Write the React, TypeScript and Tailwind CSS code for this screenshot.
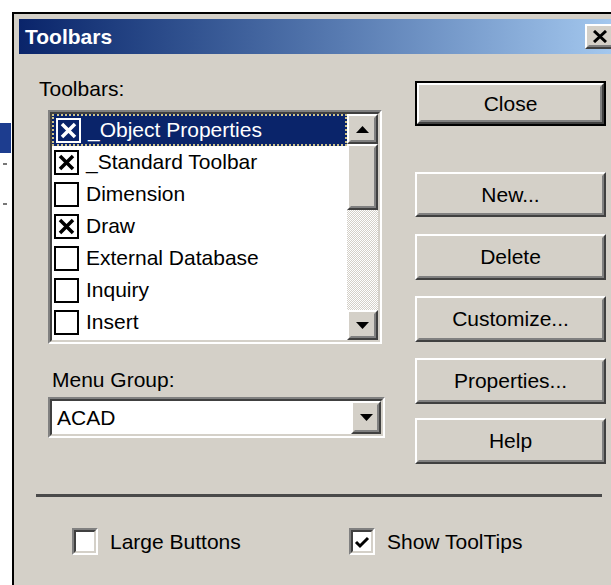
import React from "react";
import clsx from "clsx";

const font = "font-['Liberation_Sans',Arial,sans-serif]";

type Item = { label: string; checked: boolean };

const toolbars: Item[] = [
  { label: "_Object Properties", checked: true },
  { label: "_Standard Toolbar", checked: true },
  { label: "Dimension", checked: false },
  { label: "Draw", checked: true },
  { label: "External Database", checked: false },
  { label: "Inquiry", checked: false },
  { label: "Insert", checked: false },
];

// classic raised 3d edge
const Raised = ({
  className,
  children,
}: {
  className?: string;
  children?: React.ReactNode;
}) => (
  <div
    className={clsx(
      "border-2 border-t-white border-l-white border-b-[#404040] border-r-[#404040] bg-[#d4d0c8]",
      className
    )}
  >
    <div className="h-full w-full border-2 border-t-[#d4d0c8] border-l-[#d4d0c8] border-b-[#808080] border-r-[#808080] flex items-center justify-center">
      {children}
    </div>
  </div>
);

const Sunken = ({
  className,
  children,
}: {
  className?: string;
  children?: React.ReactNode;
}) => (
  <div
    className={clsx(
      "border-2 border-t-[#808080] border-l-[#808080] border-b-white border-r-white",
      className
    )}
  >
    <div className="h-full w-full border-2 border-t-[#404040] border-l-[#404040] border-b-[#d4d0c8] border-r-[#d4d0c8] bg-white overflow-hidden">
      {children}
    </div>
  </div>
);

const Button = ({
  label,
  isDefault,
  className,
}: {
  label: string;
  isDefault?: boolean;
  className?: string;
}) => {
  const inner = (
    <Raised className="h-full w-full">
      <span className="text-[21px] leading-[24px] text-black">{label}</span>
    </Raised>
  );
  if (isDefault) {
    return (
      <div className={clsx("border-2 border-black", className)}>{inner}</div>
    );
  }
  return <div className={className}>{inner}</div>;
};

const Arrow = ({ down }: { down?: boolean }) => (
  <svg width="13" height="7" viewBox="0 0 13 7">
    <path
      d={down ? "M0 0 H13 L6.5 7 Z" : "M0 7 H13 L6.5 0 Z"}
      fill="#000"
    />
  </svg>
);

const ListCheck = ({
  checked,
  selected,
}: {
  checked: boolean;
  selected: boolean;
}) => (
  <div
    className={clsx(
      "w-[25px] h-[25px] border-2 flex items-center justify-center shrink-0",
      selected ? "border-white bg-[#0a246a]" : "border-black bg-white"
    )}
  >
    {checked && (
      <svg width="17" height="17" viewBox="0 0 17 17">
        <path
          d="M2 2 L15 15 M15 2 L2 15"
          stroke={selected ? "#fff" : "#000"}
          strokeWidth="3.5"
        />
      </svg>
    )}
  </div>
);

const CheckBox = ({ checked, label }: { checked: boolean; label: string }) => (
  <div className="flex items-center gap-[12px]">
    <Sunken className="w-[26px] h-[27px]">
      {checked && (
        <div className="h-full w-full flex items-center justify-center">
          <svg width="16" height="14" viewBox="0 0 16 14">
            <path
              d="M2 7 L6 11 L14 3"
              fill="none"
              stroke="#000"
              strokeWidth="3"
            />
          </svg>
        </div>
      )}
    </Sunken>
    <span className="text-[21px] leading-[24px] text-black">{label}</span>
  </div>
);

export default function App() {
  return (
    <div
      className={clsx(
        "relative h-[585px] w-[611px] overflow-hidden bg-white flex",
        font
      )}
    >
      {/* bits of the window behind */}
      <div className="w-[12px] shrink-0 flex flex-col">
        <div className="mt-[123px] h-[30px] w-[11px] bg-[#1d3d8f]" />
        <div className="mt-[10px] ml-[3px] h-[2px] w-[4px] bg-[#777]" />
        <div className="mt-[38px] ml-[3px] h-[2px] w-[4px] bg-[#777]" />
      </div>

      <div className="mt-[12px] w-[612px] h-[600px] shrink-0 border-l-2 border-t-2 border-black bg-[#d4d0c8] p-[5px]">
        {/* title bar */}
        <div className="h-[35px] bg-linear-to-r from-[#0a246a] to-[#a6caf0] flex items-center justify-between pl-[6px] pr-[4px]">
          <span className="text-white font-bold text-[21px] leading-[24px]">
            Toolbars
          </span>
          <Raised className="w-[30px] h-[25px]">
            <svg width="14" height="13" viewBox="0 0 14 13">
              <path d="M1 1 L13 12 M13 1 L1 12" stroke="#000" strokeWidth="3" />
            </svg>
          </Raised>
        </div>

        <div className="flex">
          {/* left column */}
          <div className="w-[396px] shrink-0 pt-[23px]">
            <div className="pl-[20px] text-[21px] leading-[24px] text-black">
              Toolbars:
            </div>
            <Sunken className="ml-[29px] mt-[9px] w-[334px] h-[234px]">
              <div className="flex h-full">
                <div className="flex-1 flex flex-col">
                  {toolbars.map((t, i) => {
                    const selected = i === 0;
                    return (
                      <div
                        key={t.label}
                        className={clsx(
                          "h-[32px] flex items-center gap-[7px] pl-[2px]",
                          selected &&
                            "bg-[#0a246a] text-white border-2 border-dotted border-[#cfc38a] pl-0"
                        )}
                      >
                        <ListCheck checked={t.checked} selected={selected} />
                        <span className="text-[21px] leading-[24px]">
                          {t.label}
                        </span>
                      </div>
                    );
                  })}
                </div>
                {/* scrollbar */}
                <div className="w-[31px] shrink-0 flex flex-col bg-[repeating-conic-gradient(#ffffff_0_25%,#d4d0c8_0_50%)] bg-[length:2px_2px]">
                  <Raised className="h-[30px]">
                    <Arrow />
                  </Raised>
                  <Raised className="h-[66px]" />
                  <div className="flex-1" />
                  <Raised className="h-[30px]">
                    <Arrow down />
                  </Raised>
                </div>
              </div>
            </Sunken>
            <div className="mt-[24px] ml-[33px] text-[21px] leading-[24px] text-black">
              Menu Group:
            </div>
            <Sunken className="mt-[5px] ml-[29px] w-[337px] h-[41px]">
              <div className="flex h-full items-center">
                <span className="flex-1 pl-[5px] text-[21px] leading-[24px] text-black">
                  ACAD
                </span>
                <Raised className="w-[30px] h-full">
                  <Arrow down />
                </Raised>
              </div>
            </Sunken>
          </div>

          {/* right column */}
          <div className="w-[191px] shrink-0 pt-[27px] flex flex-col">
            <Button label="Close" isDefault className="h-[45px]" />
            <Button label="New..." className="mt-[46px] h-[45px]" />
            <Button label="Delete" className="mt-[17px] h-[46px]" />
            <Button label="Customize..." className="mt-[16px] h-[46px]" />
            <Button label="Properties..." className="mt-[16px] h-[46px]" />
            <Button label="Help" className="mt-[14px] h-[46px]" />
          </div>
        </div>

        <div className="mt-[30px] ml-[17px] w-[566px] h-[3px] bg-[#4a4a4a]" />

        <div className="mt-[31px] ml-[53px] flex items-center">
          <div className="w-[277px]">
            <CheckBox checked={false} label="Large Buttons" />
          </div>
          <CheckBox checked label="Show ToolTips" />
        </div>
      </div>
    </div>
  );
}
